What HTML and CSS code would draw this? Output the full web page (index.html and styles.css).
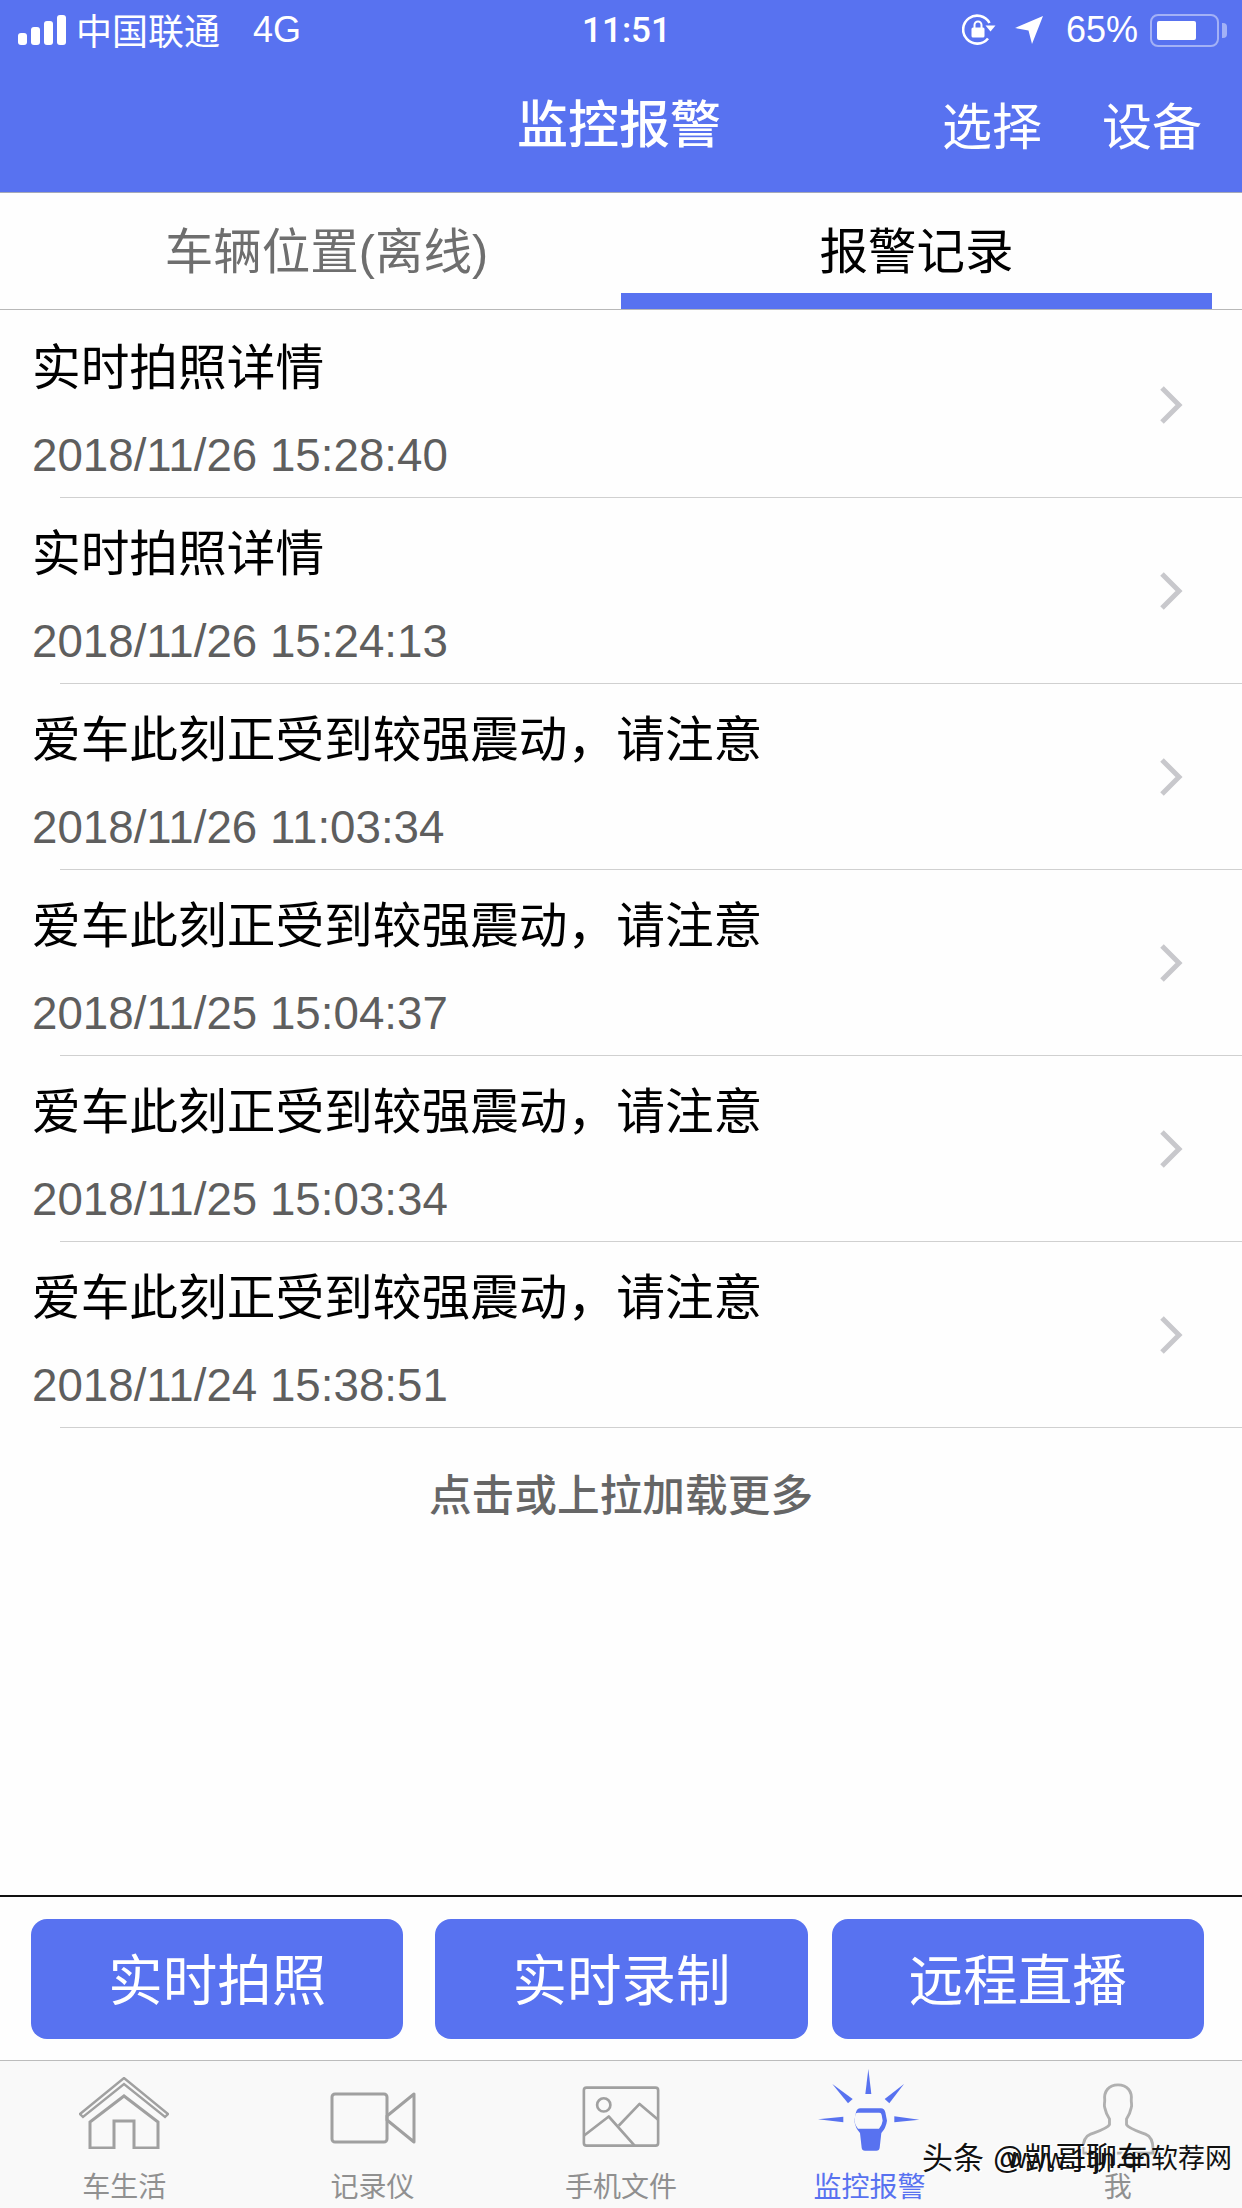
FILE: index.html
```html
<!DOCTYPE html>
<html lang="zh-CN">
<head>
    <meta charset="UTF-8" />
    <title>监控报警</title>
    <link rel="stylesheet" href="styles.css">
</head>
<body>
<div class="phone">

    <!-- 顶部蓝色区域 -->
    <header class="top">
        <div class="status-bar">
            <div class="status-left">
                <svg class="signal" width="48" height="30" viewBox="0 0 48 30">
                    <rect x="0" y="18" width="9" height="12" rx="3" fill="#fff"/>
                    <rect x="13" y="12" width="9" height="18" rx="3" fill="#fff"/>
                    <rect x="26" y="6" width="9" height="24" rx="3" fill="#fff"/>
                    <rect x="39" y="0" width="9" height="30" rx="3" fill="#fff"/>
                </svg>
                <span class="carrier">中国联通</span>
                <span class="net">4G</span>
            </div>
            <div class="status-time">11:51</div>
            <div class="status-right">
                <svg width="34" height="32" viewBox="0 0 34 32">
                    <path d="M26 24.5A14 14 0 1 1 27.5 9" fill="none" stroke="#fff" stroke-width="2.6"/>
                    <path d="M23.5 11.5h10l-5 6z" fill="#fff"/>
                    <rect x="9.5" y="13.5" width="13" height="10" rx="1.5" fill="#fff"/>
                    <path d="M12.5 14v-3a3.5 3.5 0 0 1 7 0v3" fill="none" stroke="#fff" stroke-width="2"/>
                </svg>
                <svg class="arrow" width="28" height="28" viewBox="0 0 28 28">
                    <path d="M28 0L17 28l-3.5-13.5L0 12z" fill="#fff"/>
                </svg>
                <span class="percent">65%</span>
                <div class="battery"><div class="battery-fill"></div></div>
            </div>
        </div>
        <div class="nav-bar">
            <h1 class="nav-title">监控报警</h1>
            <div class="nav-actions">
                <span>选择</span>
                <span>设备</span>
            </div>
        </div>
    </header>

    <!-- 标签 -->
    <div class="tabs">
        <div class="tab tab-first">车辆位置(离线)</div>
        <div class="tab tab-active">报警记录</div>
    </div>

    <!-- 报警列表 -->
    <ul class="records">
        <li class="record">
            <div class="record-text">
                <div class="record-title">实时拍照详情</div>
                <div class="record-date">2018/11/26 15:28:40</div>
            </div>
            <svg class="chevron" width="24" height="38" viewBox="0 0 24 38"><path d="M3 2l17 17L3 36" fill="none" stroke="#c8c8cc" stroke-width="5"/></svg>
        </li>
        <li class="record">
            <div class="record-text">
                <div class="record-title">实时拍照详情</div>
                <div class="record-date">2018/11/26 15:24:13</div>
            </div>
            <svg class="chevron" width="24" height="38" viewBox="0 0 24 38"><path d="M3 2l17 17L3 36" fill="none" stroke="#c8c8cc" stroke-width="5"/></svg>
        </li>
        <li class="record">
            <div class="record-text">
                <div class="record-title">爱车此刻正受到较强震动，请注意</div>
                <div class="record-date">2018/11/26 11:03:34</div>
            </div>
            <svg class="chevron" width="24" height="38" viewBox="0 0 24 38"><path d="M3 2l17 17L3 36" fill="none" stroke="#c8c8cc" stroke-width="5"/></svg>
        </li>
        <li class="record">
            <div class="record-text">
                <div class="record-title">爱车此刻正受到较强震动，请注意</div>
                <div class="record-date">2018/11/25 15:04:37</div>
            </div>
            <svg class="chevron" width="24" height="38" viewBox="0 0 24 38"><path d="M3 2l17 17L3 36" fill="none" stroke="#c8c8cc" stroke-width="5"/></svg>
        </li>
        <li class="record">
            <div class="record-text">
                <div class="record-title">爱车此刻正受到较强震动，请注意</div>
                <div class="record-date">2018/11/25 15:03:34</div>
            </div>
            <svg class="chevron" width="24" height="38" viewBox="0 0 24 38"><path d="M3 2l17 17L3 36" fill="none" stroke="#c8c8cc" stroke-width="5"/></svg>
        </li>
        <li class="record">
            <div class="record-text">
                <div class="record-title">爱车此刻正受到较强震动，请注意</div>
                <div class="record-date">2018/11/24 15:38:51</div>
            </div>
            <svg class="chevron" width="24" height="38" viewBox="0 0 24 38"><path d="M3 2l17 17L3 36" fill="none" stroke="#c8c8cc" stroke-width="5"/></svg>
        </li>
    </ul>
    <div class="load-more">点击或上拉加载更多</div>

    <!-- 操作按钮 -->
    <div class="actions">
        <button class="action-btn">实时拍照</button>
        <button class="action-btn">实时录制</button>
        <button class="action-btn">远程直播</button>
    </div>

    <!-- 底部导航 -->
    <nav class="tabbar">
        <div class="tabbar-item">
            <svg class="icon-home" width="90" height="72" viewBox="0 0 90 72" fill="none" stroke="#a0a0a0" stroke-width="2.4">
                <path d="M1 37L45 1l44 36-3 3L45 7 4 40z"/>
                <path d="M11 45v26h24V44h20v27h24V45L45 19z" stroke-width="3"/>
            </svg>
            <span>车生活</span>
        </div>
        <div class="tabbar-item">
            <svg class="icon-camera" width="86" height="52" viewBox="0 0 86 52" fill="none" stroke="#a0a0a0" stroke-width="3" stroke-linejoin="round">
                <rect x="2" y="2" width="55" height="48" rx="3"/>
                <path d="M57 24L84 2v48L57 28z"/>
            </svg>
            <span>记录仪</span>
        </div>
        <div class="tabbar-item">
            <svg class="icon-photo" width="78" height="61" viewBox="62 48 234 184" fill="none" stroke="#a0a0a0" stroke-width="8" stroke-linejoin="round">
                <rect x="67" y="53" width="224" height="175" rx="8"/>
                <circle cx="127" cy="105" r="20"/>
                <path d="M67 198l75-58 78 88"/>
                <path d="M172 168l63-66 56 48"/>
            </svg>
            <span>手机文件</span>
        </div>
        <div class="tabbar-item tabbar-active">
            <svg class="icon-lamp" width="102" height="84" viewBox="82 0 306 252" fill="#5872f0">
                <path d="M233 0l9 75h-18z"/>
                <path d="M125 45l61 45-14 13z"/>
                <path d="M340 45l-44 58-14-13z"/>
                <path d="M82 151l76-8v17z"/>
                <path d="M386 152l-75 8v-18z"/>
                <path d="M195 118h76q10 0 13 12l5 25q-3 22-17 37l-5 44q-1 9-10 9h-34q-9 0-10-9l-5-44q-14-15-17-37l5-25q3-12 13-12z"/>
                <path d="M201 131h65q6 0 7 7l3 17q-2 14-11 24h-63q-9-10-11-24l3-17q1-7 7-7z" fill="#f9f9f9"/>
            </svg>
            <span>监控报警</span>
        </div>
        <div class="tabbar-item">
            <svg class="icon-person" width="74" height="72" viewBox="0 0 78 76" fill="none" stroke="#b0b0b0" stroke-width="3">
                <path d="M39 2c-10 0-15 7-14 16 0 4-1 5 0 8 1 5 3 9 5 12v6c-2 4-12 7-20 10-5 2-8 7-8 16v4h74v-4c0-9-3-14-8-16-8-3-18-6-20-10v-6c2-3 4-7 5-12 1-3 0-4 0-8 1-9-4-16-14-16z"/>
            </svg>
            <span>我</span>
        </div>
    </nav>

    <!-- 水印 -->
    <div class="mark">头条 @凯哥聊车</div>
    <div class="mark mark-site">www.1tjn.cn软荐网</div>
</div>
</body>
</html>
```

FILE: styles.css
```css
* {
    box-sizing: border-box;
}

body {
    margin: 0;
    font-family: "Liberation Sans", "Noto Sans CJK SC", sans-serif;
    background: #fff;
    color: #000;
}

.phone {
    position: relative;
    width: 1242px;
    height: 2208px;
    overflow: hidden;
    display: flex;
    flex-direction: column;
    background: #fefefe;
}

/* 顶部 */
.top {
    height: 193px;
    background: #5872f0;
    border-bottom: 1px solid #a5a9b8;
    color: #fff;
}

.status-bar {
    height: 60px;
    padding: 0 15px 0 18px;
    display: grid;
    grid-template-columns: 1fr auto 1fr;
    align-items: center;
}

.status-left {
    display: flex;
    align-items: center;
    font-size: 36px;
}

.carrier {
    margin-left: 10px;
    margin-top: -2px;
    font-size: 36px;
}

.net {
    margin-left: 33px;
}

.status-time {
    margin-left: 8px;
    font-family: Roboto, sans-serif;
    font-size: 35px;
    font-weight: 500;
}

.status-right {
    display: flex;
    align-items: center;
    justify-content: flex-end;
    font-size: 36px;
}

.arrow {
    margin-left: 19px;
}

.percent {
    margin-left: 23px;
}

.battery {
    position: relative;
    width: 69px;
    height: 33px;
    margin: 0 8px 0 12px;
    padding: 5px;
    border: 2px solid #a3b1f6;
    border-radius: 8px;
}

.battery::after {
    content: "";
    position: absolute;
    right: -10px;
    top: 7px;
    width: 5px;
    height: 15px;
    background: #a3b1f6;
    border-radius: 0 4px 4px 0;
}

.battery-fill {
    width: 39px;
    height: 100%;
    background: #fff;
    border-radius: 2px;
}

.nav-bar {
    position: relative;
    height: 132px;
    display: flex;
    align-items: center;
    justify-content: flex-end;
    padding: 0 40px 6px 0;
}

.nav-title {
    position: absolute;
    left: 517px;
    top: 36px;
    margin: 0;
    font-size: 51px;
    line-height: 60px;
    font-weight: 500;
}

.nav-actions {
    display: flex;
    gap: 60px;
    font-size: 50px;
}

/* 标签 */
.tabs {
    height: 117px;
    display: flex;
    padding-right: 30px;
    border-bottom: 1px solid #b8b8b8;
}

.tab {
    width: 621px;
    padding-top: 26px;
    text-align: center;
    font-size: 48.500px;
    line-height: 66px;
    color: #6e6e6e;
}

.tab-first {
    padding-left: 32px;
}

.tab-active {
    width: 591px;
    color: #000;
    border-bottom: 16px solid #5872f0;
}

/* 列表 */
.records {
    list-style: none;
    margin: 2px 0 0;
    padding: 0;
}

.record {
    position: relative;
    height: 186px;
    padding: 0 0 0 32px;
    display: flex;
    align-items: center;
    justify-content: space-between;
}

.record::after {
    content: "";
    position: absolute;
    left: 60px;
    right: 0;
    bottom: 0;
    height: 1px;
    background: #d0d0d0;
}

.record-text {
    padding-top: 8px;
}

.record-title {
    font-size: 48.700px;
    line-height: 60px;
}

.record-date {
    margin-top: 33px;
    font-size: 45.700px;
    line-height: 50px;
    color: #5e5e5e;
}

.chevron {
    margin-right: 59px;
}

.load-more {
    margin-top: 40px;
    text-align: center;
    font-size: 42.700px;
    line-height: 56px;
    font-weight: 500;
    color: #666;
}

/* 按钮 */
.actions {
    margin-top: auto;
    height: 165px;
    padding: 22px 38px 21px 31px;
    display: flex;
    gap: 32px;
    border-top: 2px solid #111;
}

.action-btn {
    flex: 1;
    padding: 0 0 5px;
    border: none;
    border-radius: 16px;
    background: #5872f0;
    color: #fff;
    font-family: inherit;
    font-size: 54.500px;
}

.action-btn:last-child {
    margin-left: -8px;
}

/* 底部导航 */
.tabbar {
    height: 148px;
    display: grid;
    grid-template-columns: repeat(5, 1fr);
    background: #f9f9f9;
    border-top: 1px solid #bcbcbc;
}

.tabbar-item {
    display: flex;
    flex-direction: column;
    align-items: center;
    font-size: 28px;
    line-height: 36px;
    color: #909090;
    padding-bottom: 2px;
}

.tabbar-item span {
    margin-top: auto;
}

.tabbar-active {
    color: #5872f0;
}

.icon-home {
    margin-top: 16px;
}

.icon-camera {
    margin-top: 31px;
}

.icon-photo {
    margin-top: 25px;
}

.icon-lamp {
    margin-top: 8px;
}

.icon-person {
    margin-top: 22px;
}

/* 水印 */
.mark {
    position: absolute;
    left: 922px;
    bottom: 29px;
    font-size: 31px;
    line-height: 40px;
    color: #111;
    text-shadow: 2px 1px 0 #fff, -2px -1px 0 rgba(255,255,255,0.8);
    white-space: nowrap;
}

.mark-site {
    left: 1007px;
    font-size: 27px;
    text-shadow: none;
}
```
